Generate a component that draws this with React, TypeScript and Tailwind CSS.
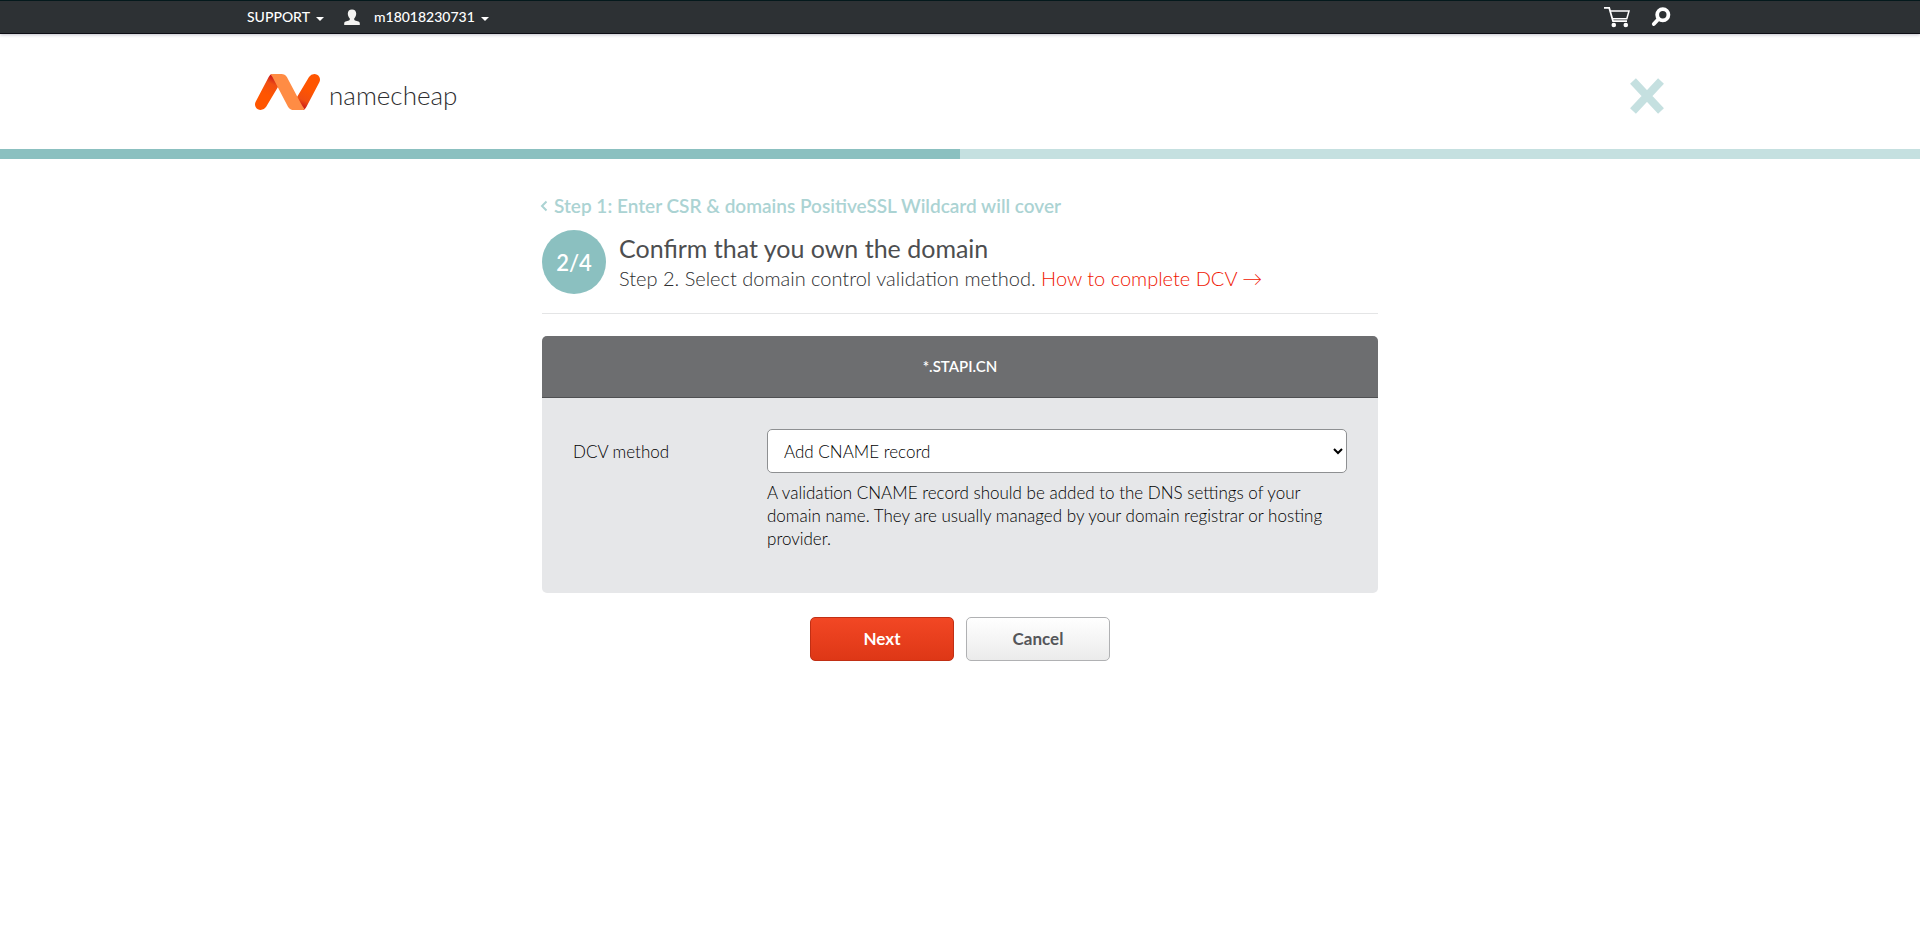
import { useState } from "react";

const DCV_METHODS = [
  { value: "cname", label: "Add CNAME record" },
  { value: "http", label: "Upload a validation file" },
  { value: "email", label: "Receive an email" },
];

function Caret() {
  return (
    <svg width="8" height="4" viewBox="0 0 8 4" aria-hidden="true" className="mt-1 fill-current">
      <path d="M0 0h8L4 4z" />
    </svg>
  );
}

function TopBar() {
  return (
    <div className="border-t border-[#04191c] border-b border-b-[#0d0d14] bg-[#2d3134] text-white shadow-[0_1px_3px_rgba(60,60,90,0.3)]">
      <div className="mx-auto flex h-8 w-full max-w-[1426px] items-center justify-between">
        <div className="flex items-center pb-px">
          <button type="button" className="flex items-center gap-[6px] text-sm leading-5 font-medium">
            SUPPORT
            <Caret />
          </button>
          <button type="button" className="ml-5 flex items-center gap-[6px] text-sm leading-5 font-medium">
            <svg width="16" height="16" viewBox="0 0 16 16" aria-hidden="true" className="mr-2 fill-[#f4f4f2]">
              <path d="M8 0.5c2.6 0 4.2 1.6 4.2 4.1 0 2-.8 3.8-2 4.8v1c0 .5.3.8.8 1l3.4 1.2c.9.4 1.4 1 1.4 1.9V16H.2v-1.500c0-.9.5-1.500 1.400-1.900L5 11.400c.5-.2.8-.5.8-1v-1c-1.200-1-2-2.800-2-4.800C3.800 2.100 5.400.5 8 .5z" />
            </svg>
            m18018230731
            <Caret />
          </button>
        </div>
        <div className="flex items-center gap-5 pr-[2px]">
          <a href="#cart" aria-label="Shopping cart">
            <svg width="28" height="22" viewBox="0 0 28 22" fill="none" aria-hidden="true">
              <path d="M1 1.800h5.200L10 15.200h14" stroke="#fff" strokeWidth="1.800" />
              <path d="M7.300 5h18.700l-2.200 7.800H9.300" stroke="#fff" strokeWidth="1.500" />
              <circle cx="10.800" cy="19" r="2.300" fill="#fff" />
              <circle cx="22.800" cy="19" r="2.300" fill="#fff" />
            </svg>
          </a>
          <button type="button" aria-label="Search">
            <svg width="20" height="20" viewBox="0 0 20 20" fill="none" aria-hidden="true">
              <circle cx="11.800" cy="7.800" r="5.600" stroke="#fff" strokeWidth="3.800" />
              <path d="M7.500 12L2.800 17" stroke="#fff" strokeWidth="3.800" strokeLinecap="round" />
            </svg>
          </button>
        </div>
      </div>
    </div>
  );
}

function Logo() {
  return (
    <a href="#home" aria-label="Namecheap home" className="flex items-center gap-[9px]">
      <svg width="65" height="36" viewBox="0 0 195 108" aria-hidden="true">
        <defs>
          <linearGradient id="left-leg" x1="58" y1="5" x2="15" y2="100" gradientUnits="userSpaceOnUse">
            <stop offset="0" stopColor="#c2121f" />
            <stop offset="0.250" stopColor="#f04e12" />
            <stop offset="0.600" stopColor="#ff5500" />
          </linearGradient>
          <linearGradient id="right-leg" x1="137" y1="103" x2="180" y2="8" gradientUnits="userSpaceOnUse">
            <stop offset="0" stopColor="#c2121f" />
            <stop offset="0.250" stopColor="#f04e12" />
            <stop offset="0.600" stopColor="#ff5500" />
          </linearGradient>
        </defs>
        <path d="M50 0L72 34 33 99Q27 108 17 108A17 17 0 0 1 2 83L41 9Q45 1 50 0z" fill="url(#left-leg)" />
        <path d="M145 108L123 74 162 9Q168 0 178 0A17 17 0 0 1 193 25L154 99Q150 107 145 108z" fill="url(#right-leg)" />
        <path d="M46 1Q50 0 54 0H79Q90 0 96 10L137 87Q143 98 149 106Q146 108 141 108H117Q105 108 99 98L59 22Q53 8 46 1z" fill="#ff8c44" />
      </svg>
      <span className="pt-[6px] text-[26px] leading-7 font-light text-[#2d2d2f]">namecheap</span>
    </a>
  );
}

function SiteHeader() {
  return (
    <header>
      <div className="mx-auto flex h-[115px] w-full max-w-[1410px] items-center justify-between">
        <Logo />
        <button type="button" aria-label="Close" className="mt-2">
          <svg width="36" height="38" viewBox="0 0 36 38" fill="none" aria-hidden="true">
            <path d="M4 4l28 30M32 4L4 34" stroke="#c5e0e0" strokeWidth="8" />
          </svg>
        </button>
      </div>
      <div role="progressbar" aria-label="Activation progress" aria-valuenow={50} className="h-[10px] bg-[#c5e0e0]">
        <div className="h-full w-1/2 bg-[#8bc0c0]" />
      </div>
    </header>
  );
}

export default function App() {
  const [method, setMethod] = useState("cname");

  return (
    <div className="min-h-screen bg-white font-[Lato,sans-serif] text-[#4d4e50]">
      <TopBar />
      <SiteHeader />
      <main className="mx-auto w-full max-w-[836px] pt-[35px]">
        <a href="#step-1" className="-ml-1 flex items-center gap-[6px] text-[19px] leading-6 font-semibold text-[#abd3d3]">
          <svg width="10" height="12" viewBox="0 0 10 12" fill="none" aria-hidden="true">
            <path d="M8.500 1.500L4 6l4.500 4.500" stroke="currentColor" strokeWidth="2" />
          </svg>
          Step 1: Enter CSR &amp; domains PositiveSSL Wildcard will cover
        </a>
        <div className="mt-3 flex items-center gap-[13px] border-b border-[#e4e5e6] pb-[19px]">
          <div className="flex size-16 shrink-0 items-center justify-center rounded-full bg-[#8bc0c0] text-[22px] font-semibold text-white">
            2/4
          </div>
          <div>
            <h1 className="text-[25px] leading-8">Confirm that you own the domain</h1>
            <p className="text-xl leading-7 font-light text-[#2d2e30]">
              Step 2. Select domain control validation method.{" "}
              <a href="#dcv" className="text-[#f01400]">
                How to complete DCV →
              </a>
            </p>
          </div>
        </div>

        <section className="mt-[22px] overflow-hidden rounded-[5px] bg-[#e6e7e9]">
          <h2 className="flex h-[62px] items-center justify-center border-b border-[#4f5052] bg-[#6d6e70] text-[15px] font-semibold text-white">
            *.STAPI.CN
          </h2>
          <div className="flex px-[31px] pt-[31px] pb-[43px]">
            <label htmlFor="dcv-method" className="w-[194px] shrink-0 text-[17px] leading-[46px] font-light text-black">
              DCV method
            </label>
            <div className="flex-1">
              <select
                id="dcv-method"
                value={method}
                onChange={(e) => setMethod(e.target.value)}
                className="block h-11 w-full rounded-[5px] border border-[#8e9092] bg-white px-3 text-[17px] font-light text-black"
              >
                {DCV_METHODS.map((m) => (
                  <option key={m.value} value={m.value}>
                    {m.label}
                  </option>
                ))}
              </select>
              <p className="mt-2 pr-4 text-[17px] leading-[23px] font-light text-black">
                A validation CNAME record should be added to the DNS settings of your domain name. They are usually
                managed by your domain registrar or hosting provider.
              </p>
            </div>
          </div>
        </section>

        <div className="mt-6 flex justify-center gap-3">
          <button
            type="button"
            className="h-11 w-36 rounded-[5px] border border-[#c12f14] bg-linear-to-b from-[#f24724] to-[#de3716] text-[17px] font-bold text-white"
          >
            Next
          </button>
          <button
            type="button"
            className="h-11 w-36 rounded-[5px] border border-[#b0b1b3] bg-linear-to-b from-white to-[#ebebeb] text-[17px] font-bold text-[#55565a]"
          >
            Cancel
          </button>
        </div>
      </main>
    </div>
  );
}
